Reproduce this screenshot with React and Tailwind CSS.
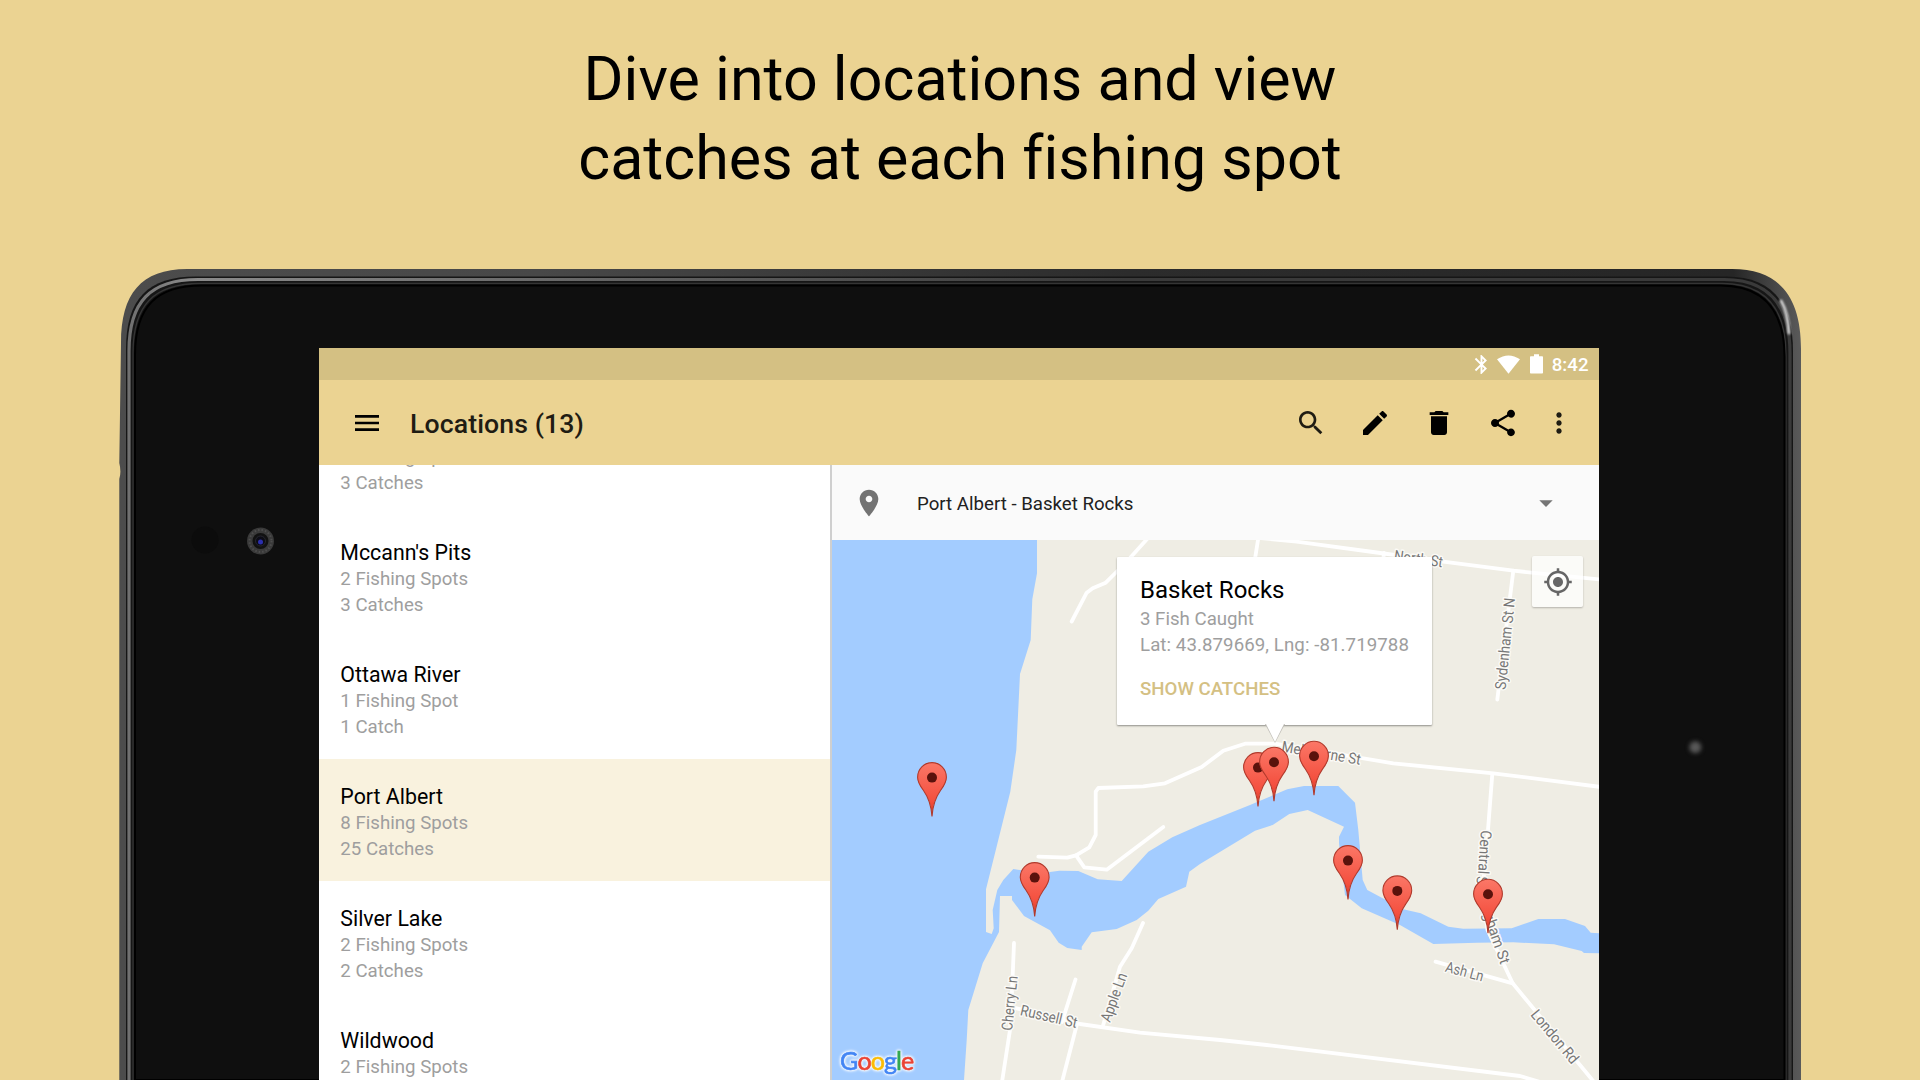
const WATER =
  'M832 540 L1037 540 L1037 573.3 L1032.3 599.3 L1030.7 640 L1020 674 L1016.3 750 L1010.3 791.7 L986 889.3 L986 932 L991.7 934 L993.7 928.3 L992.7 910 L997.3 890 L1003.3 880 L1013.3 869 L1020 870 L1050 872 L1059.3 870.7 L1078.3 871 L1097.7 879.3 L1121.7 881 L1148.3 851.7 L1172.3 837.3 L1200 825 L1250 805 L1287.3 789.3 L1304 786 L1338.3 786 L1355 802.7 L1358.3 830 L1362.7 880 L1367.3 890 L1403.3 909.3 L1420.7 913.3 L1448.3 926.7 L1463.3 928.7 L1511.7 928.3 L1538.3 919 L1565 919 L1585 926 L1590.7 932.7 L1600 933.3 L1600 953.3 L1584 953 L1581.7 951 L1554 944.3 L1513.3 942.3 L1476.7 942.7 L1433.3 944 L1400 925 L1361.7 908.3 L1345 895 L1339 843.3 L1339 836.7 L1344 826.7 L1307.7 810 L1289.3 814 L1272.7 825 L1255 830.7 L1200 864 L1189.3 871.7 L1186 886.7 L1158.3 899 L1148.3 910.7 L1136.7 920 L1116.7 929 L1091.7 932.3 L1081.7 946.7 L1081.7 950 L1067.3 948 L1058.7 942.7 L1050 930.3 L1024 916 L1012 900 L1012 896 L1000 896 L999 932 L982.7 963.3 L968.3 1010 L966.7 1040 L964 1080 L832 1080 Z';

const ROADS = [
  'M1148 538 L1130 558 L1116.7 571.7 L1105.7 582.7 L1092.7 588.3 L1086.7 592.7 L1071.7 621.5',
  'M1250 537 L1296.7 541.7 L1373 552 L1443.3 561.7 L1513.3 570.7 L1601 579.6',
  'M1258 540 L1254.5 562',
  'M1384 553 L1383 562',
  'M1513.3 570.7 L1497.3 699.5',
  'M1038.3 856.7 L1067.3 857.7 L1076 855.3 L1089.3 847.3 L1095.7 835 L1095.7 791.7 L1098.3 788 L1143.3 786.3 L1165 783.3 L1201.7 767 L1223.3 750.7 L1245 743.7 L1275 743.7 L1393.3 763.3 L1493.3 773.3 L1601 787',
  'M1076 855.3 L1084.3 867.3 L1106.7 869.7 L1163.3 827',
  'M1492.3 774 L1488 830 L1483.5 880 L1487.5 930 L1512.7 983.3 L1594 1082',
  'M1435.5 961.7 L1512.7 983.3',
  'M1014 943 L1012.5 980 L1010 1030 L1002 1082',
  'M1016.7 1008.3 L1080 1024 L1140 1032.7 L1220 1040 L1266.7 1045 L1520 1076 L1540 1082',
  'M1075.5 979.5 L1062 1022',
  'M1077 1024 L1062 1082',
  'M1143 923 L1131.7 948.3 L1120 966.7 L1102.7 1026.7',
];

const LABELS = [
  { t: 'North St', x: 1393.5, y: 560.5, a: 8, w: 49 },
  { t: 'Sydenham St N', x: 1505.5, y: 690, a: -84, w: 92 },
  { t: 'Melbourne St', x: 1281, y: 751.5, a: 9.5, w: 80 },
  { t: 'Central', x: 1481, y: 830, a: 94, w: 44 },
  { t: 'S', x: 1477, y: 876, a: 94, w: 8 },
  { t: 'gham St', x: 1483, y: 914, a: 71, w: 54 },
  { t: 'Ash Ln', x: 1444.5, y: 971.5, a: 15, w: 39 },
  { t: 'London Rd', x: 1530, y: 1015, a: 50, w: 65 },
  { t: 'Cherry Ln', x: 1012, y: 1031, a: -84, w: 55 },
  { t: 'Russell St', x: 1019.5, y: 1015, a: 13, w: 58 },
  { t: 'Apple Ln', x: 1110, y: 1023, a: -70, w: 51 },
];

const PINS = [
  [932, 817],
  [1034.7, 917],
  [1258, 807],
  [1274, 801.7],
  [1314, 795.7],
  [1348, 900],
  [1397.3, 930.3],
  [1488, 933.7],
];

const LOCATIONS = [
  { name: '', spots: '2 Fishing Spots', catches: '3 Catches' },
  { name: "Mccann's Pits", spots: '2 Fishing Spots', catches: '3 Catches' },
  { name: 'Ottawa River', spots: '1 Fishing Spot', catches: '1 Catch' },
  { name: 'Port Albert', spots: '8 Fishing Spots', catches: '25 Catches', active: true },
  { name: 'Silver Lake', spots: '2 Fishing Spots', catches: '2 Catches' },
  { name: 'Wildwood', spots: '2 Fishing Spots', catches: '' },
];

const ICONS = {
  menu: 'M3 18h18v-2H3v2zm0-5h18v-2H3v2zm0-7v2h18V6H3z',
  search:
    'M15.5 14h-.79l-.28-.27C15.41 12.59 16 11.11 16 9.5 16 5.91 13.09 3 9.5 3S3 5.91 3 9.5 5.91 16 9.5 16c1.61 0 3.09-.59 4.23-1.57l.27.28v.79l5 4.99L20.49 19l-4.99-5zm-6 0C7.01 14 5 11.99 5 9.5S7.01 5 9.5 5 14 7.01 14 9.5 11.99 14 9.5 14z',
  edit: 'M3 17.25V21h3.75L17.81 9.94l-3.75-3.75L3 17.25zM20.71 7.04c.39-.39.39-1.02 0-1.41l-2.34-2.34c-.39-.39-1.02-.39-1.41 0l-1.83 1.83 3.75 3.75 1.83-1.83z',
  trash: 'M6 19c0 1.1.9 2 2 2h8c1.1 0 2-.9 2-2V7H6v12zM19 4h-3.5l-1-1h-5l-1 1H5v2h14V4z',
  share:
    'M18 16.08c-.76 0-1.44.3-1.96.77L8.91 12.7c.05-.23.09-.46.09-.7s-.04-.47-.09-.7l7.05-4.11c.54.5 1.25.81 2.04.81 1.66 0 3-1.34 3-3s-1.34-3-3-3-3 1.34-3 3c0 .24.04.47.09.7L8.04 9.81C7.5 9.31 6.79 9 6 9c-1.66 0-3 1.34-3 3s1.34 3 3 3c.79 0 1.5-.31 2.04-.81l7.12 4.16c-.05.21-.08.43-.08.65 0 1.61 1.31 2.92 2.92 2.92 1.61 0 2.92-1.31 2.92-2.92s-1.31-2.92-2.92-2.92z',
  more: 'M12 8c1.1 0 2-.9 2-2s-.9-2-2-2-2 .9-2 2 .9 2 2 2zm0 2c-1.1 0-2 .9-2 2s.9 2 2 2 2-.9 2-2-.9-2-2-2zm0 6c-1.1 0-2 .9-2 2s.9 2 2 2 2-.9 2-2-.9-2-2-2z',
  place:
    'M12 2C8.13 2 5 5.13 5 9c0 5.25 7 13 7 13s7-7.75 7-13c0-3.87-3.13-7-7-7zm0 9.5c-1.38 0-2.5-1.12-2.5-2.5s1.12-2.5 2.5-2.5 2.5 1.12 2.5 2.5-1.12 2.5-2.5 2.5z',
  caret: 'M7 10l5 5 5-5z',
  target:
    'M12 8c-2.21 0-4 1.79-4 4s1.79 4 4 4 4-1.79 4-4-1.79-4-4-4zm8.94 3c-.46-4.17-3.77-7.48-7.94-7.94V1h-2v2.06C6.83 3.52 3.52 6.83 3.06 11H1v2h2.06c.46 4.17 3.77 7.48 7.94 7.94V23h2v-2.06c4.17-.46 7.48-3.77 7.94-7.94H23v-2h-2.06zM12 19c-3.87 0-7-3.13-7-7s3.13-7 7-7 7 3.13 7 7-3.13 7-7 7z',
  bluetooth:
    'M17.71 7.71L12 2h-1v7.59L6.41 5 5 6.41 10.59 12 5 17.59 6.41 19 11 14.41V22h1l5.71-5.71-4.3-4.29 4.3-4.29zM13 5.83l1.88 1.88L13 9.59V5.83zm1.88 10.46L13 18.17v-3.76l1.88 1.88z',
};

function Icon({ name, className }) {
  return (
    <svg viewBox="0 0 24 24" fill="currentColor" className={className}>
      <path d={ICONS[name]} />
    </svg>
  );
}

function StatusBar() {
  return (
    <div className="flex h-8 shrink-0 items-center justify-end bg-[#d4c083] pr-[10.5px] text-white">
      <Icon name="bluetooth" className="mr-[4px] size-[23px]" />
      <svg viewBox="0 0 23 19" className="mr-[10px] h-[19px] w-[23px]" fill="currentColor">
        <path d="M11.5 18.7 L0 4.2 Q11.5 -3.4 23 4.2 Z" />
      </svg>
      <svg viewBox="0 0 13 20" className="mr-[9px] h-5 w-[13px]" fill="currentColor">
        <path d="M4 0.3h5v2h3.2a.8.8 0 0 1 .8.8v15.6a.8.8 0 0 1-.8.8H.8a.8.8 0 0 1-.8-.8V3.1a.8.8 0 0 1 .8-.8H4z" />
      </svg>
      <span className="mt-[2px] text-[18.67px] font-medium leading-8">8:42</span>
    </div>
  );
}

function AppBar() {
  return (
    <div className="flex h-[85px] shrink-0 items-center bg-[#ebd392] pl-8 pr-6 text-black">
      <Icon name="menu" className="size-8" />
      <h2 className="ml-[27px] mt-[2px] flex-1 text-[26.67px] font-medium tracking-[0.1px] text-[#1f1c13]">
        Locations (13)
      </h2>
      <div className="flex items-center gap-8">
        <Icon name="search" className="size-8 text-[#1f1c13]" />
        <Icon name="edit" className="size-8" />
        <Icon name="trash" className="size-8" />
        <Icon name="share" className="size-8" />
      </div>
      <Icon name="more" className="ml-6 size-8 text-[#1f1c13]" />
    </div>
  );
}

function LocationList() {
  return (
    <div className="h-full w-[511px] shrink-0 overflow-hidden bg-white">
      <ul className="-mt-[72px]">
        {LOCATIONS.map((l, i) => (
          <li
            key={i}
            className={`h-[122px] pl-[21.33px] pt-[23px] ${l.active ? 'bg-[#f9f2de]' : 'bg-white'}`}
          >
            <p className="h-[29px] text-[21.33px] leading-[30px] text-black">{l.name}</p>
            <p className="text-[18.67px] leading-[25px] text-[#9e9e9e]">{l.spots}</p>
            <p className="mt-[0.6px] text-[18.67px] leading-[25px] text-[#9e9e9e]">{l.catches}</p>
          </li>
        ))}
      </ul>
    </div>
  );
}

function Pin({ x, y }) {
  return (
    <g transform={`translate(${x - 15} ${y - 55})`}>
      <path
        d="M15 54.5 C14.3 44 12.2 36.5 6.5 28.5 C3 23.8 .6 20.5 .6 15.2 A14.4 14.6 0 0 1 29.4 15.2 C29.4 20.5 27 23.8 23.5 28.5 C17.8 36.5 15.7 44 15 54.5 Z"
        fill="url(#pinFill)"
        stroke="#b03a2c"
        strokeWidth="1.1"
      />
      <circle cx="15" cy="15.6" r="5" fill="#5a120c" />
    </g>
  );
}

function MapView() {
  return (
    <div className="relative flex-1 overflow-hidden bg-[#efede4]">
      <svg viewBox="832 540 767 540" className="block h-[540px] w-[767px]">
        <defs>
          <linearGradient id="pinFill" x1="0" y1="0" x2="0" y2="1">
            <stop offset="0" stopColor="#fb7767" />
            <stop offset="0.7" stopColor="#f4503f" />
            <stop offset="1" stopColor="#d8341f" />
          </linearGradient>
        </defs>
        <path d={WATER} fill="#a3ccff" />
        <g fill="none" stroke="#fff" strokeWidth="3.8" strokeLinecap="round" strokeLinejoin="round">
          {ROADS.map((d) => (
            <path key={d} d={d} />
          ))}
        </g>
        <g
          fontFamily="Roboto, sans-serif"
          fontSize="15.2"
          fill="#777"
          stroke="#fbfaf6"
          strokeWidth="3"
          strokeLinejoin="round"
          paintOrder="stroke"
        >
          {LABELS.map((l) => (
            <text
              key={l.t + l.x}
              transform={`translate(${l.x} ${l.y}) rotate(${l.a})`}
              textLength={l.w}
              lengthAdjust="spacingAndGlyphs"
            >
              {l.t}
            </text>
          ))}
        </g>
        {PINS.map(([x, y]) => (
          <Pin key={x} x={x} y={y} />
        ))}
      </svg>

      <div className="absolute left-[285px] top-[17px] h-[168px] w-[315px] rounded-[1px] bg-white pl-[23px] pt-[17px] shadow-[0_1px_2px_rgba(0,0,0,0.4)]">
        <h3 className="text-[24px] leading-[33px] text-black">Basket Rocks</h3>
        <p className="text-[18.67px] leading-[25px] text-[#9e9e9e]">3 Fish Caught</p>
        <p className="mt-px text-[18.67px] leading-[25px] tracking-[0.08px] text-[#9e9e9e]">
          Lat: 43.879669, Lng: -81.719788
        </p>
        <p className="mt-[19px] text-[18.67px] font-medium leading-[25px] text-[#d4c083]">SHOW CATCHES</p>
        <svg viewBox="0 0 20 20" className="absolute left-[147.5px] top-[167px] size-5">
          <path d="M0 0 L10 19 L20 0 Z" fill="#bdbbb4" />
          <path d="M1 0 L10 18 L19 0 Z" fill="#fff" />
        </svg>
      </div>

      <div className="absolute right-4 top-4 flex size-[51px] items-center justify-center rounded-[2px] bg-white/75 text-[#666] shadow-[0_1px_2px_rgba(0,0,0,0.25)]">
        <Icon name="target" className="size-[30px]" />
      </div>

      <div className="absolute bottom-[6px] left-[8px] flex text-[25px] leading-7 tracking-[-0.9px] font-[Lato,sans-serif] [-webkit-text-stroke-width:0.6px] [filter:drop-shadow(0_0_1px_#fff)_drop-shadow(0_0_1px_#e3effd)_drop-shadow(0_0_1px_#e3effd)]">
        <span className="text-[#4285f4]">G</span>
        <span className="text-[#ea4335]">o</span>
        <span className="text-[#fbbc05]">o</span>
        <span className="text-[#4285f4]">g</span>
        <span className="text-[#34a853]">l</span>
        <span className="text-[#ea4335]">e</span>
      </div>
    </div>
  );
}

function Detail() {
  return (
    <div className="flex flex-1 flex-col">
      <div className="flex h-[75px] shrink-0 items-center bg-[#fafafa] pl-[21px] pr-[37px]">
        <Icon name="place" className="size-8 text-[#737373]" />
        <span className="ml-8 mt-[2px] flex-1 text-[18.67px] text-[#212121]">Port Albert - Basket Rocks</span>
        <Icon name="caret" className="size-8 text-[#757575]" />
      </div>
      <MapView />
    </div>
  );
}

function Screen() {
  return (
    <div className="flex h-[732px] w-[1280px] flex-col overflow-hidden bg-white">
      <StatusBar />
      <AppBar />
      <div className="flex flex-1 overflow-hidden">
        <LocationList />
        <div className="w-[2px] shrink-0 bg-[#cfcfcf]" />
        <Detail />
      </div>
    </div>
  );
}

function Tablet() {
  return (
    <div className="relative ml-[120px] mt-[269px] h-[811px] w-[1681px]">
      <svg viewBox="0 0 1681 811" className="absolute inset-0 h-[811px] w-[1681px] overflow-visible">
        <defs>
          <linearGradient id="rim" x1="0" x2="1" y1="0" y2="0">
            <stop offset="0" stopColor="#4c4c4c" />
            <stop offset="0.25" stopColor="#484848" />
            <stop offset="0.6" stopColor="#2c2c2c" />
            <stop offset="0.96" stopColor="#262626" />
            <stop offset="1" stopColor="#5a5a5a" />
          </linearGradient>
          <linearGradient id="glint" x1="0" x2="1" y1="0" y2="0">
            <stop offset="0" stopColor="#707070" />
            <stop offset="0.04" stopColor="#8a8a8a" />
            <stop offset="0.3" stopColor="#626262" />
            <stop offset="0.6" stopColor="#3a3a3a" />
            <stop offset="1" stopColor="#3a3a3a" />
          </linearGradient>
        </defs>
        <path d="M-.7 811 V210 Q1.500 203 -.7 194 L1 74 C1 25 21 0 67 0 H1612 C1661 0 1681 30 1681 80 V811 Z" fill="url(#rim)" />
        <path d="M6 811 V80 C6 30 28 7.500 76 7.500 H1606 C1652 7.500 1673 34 1673 82 V811 Z" fill="#161616" />
        <path d="M9 811 V82 C9 33 30 10.500 78 10.500 H1604 C1649 10.500 1670 36 1670 84 V811" fill="none" stroke="url(#glint)" strokeWidth="3.2" />
        <path d="M13 811 V84 C13 36 34 14.500 80 14.500 H1602 C1645 14.500 1666 39 1666 86 V811" fill="none" stroke="#353535" strokeWidth="1.3" />
        <path d="M15 811 V86 C15 38 36 16.500 82 16.500 H1600 C1643 16.500 1664.500 41 1664.500 88 V811 Z" fill="#0f0f0f" stroke="#000" strokeWidth="2" />
        <path d="M1661 32 Q1668 44 1669 64" fill="none" stroke="#d8d8d8" strokeWidth="3" strokeLinecap="round" className="blur-[1px]" />
        <circle cx="85" cy="271" r="13.500" fill="#0c0c0c" />
        <circle cx="140.500" cy="272" r="13.500" fill="#3a3a3a" />
        <circle cx="140.500" cy="272" r="11" fill="none" stroke="#4e4e4e" strokeWidth="2" strokeDasharray="1.500 2" />
        <circle cx="140.500" cy="272" r="8" fill="#111" />
        <circle cx="140.500" cy="272" r="5" fill="#0c0c16" stroke="#26262e" />
        <circle cx="140.500" cy="273" r="2.500" fill="#2c2fae" />
        <circle cx="1575.300" cy="478.300" r="6" fill="#585858" className="blur-[2px]" />
      </svg>
      <div className="relative pl-[199px] pt-[79px]">
        <Screen />
      </div>
    </div>
  );
}

export default function App() {
  return (
    <div className="flow-root h-[1080px] w-[1920px] overflow-hidden bg-[#ebd392] font-[Roboto,sans-serif]">
      <h1 className="-mb-[198px] pt-[40px] text-center text-[61px] leading-[79px] text-black [font-variant-ligatures:none]">
        Dive into locations and view
        <br />
        catches at each fishing spot
      </h1>
      <Tablet />
    </div>
  );
}
